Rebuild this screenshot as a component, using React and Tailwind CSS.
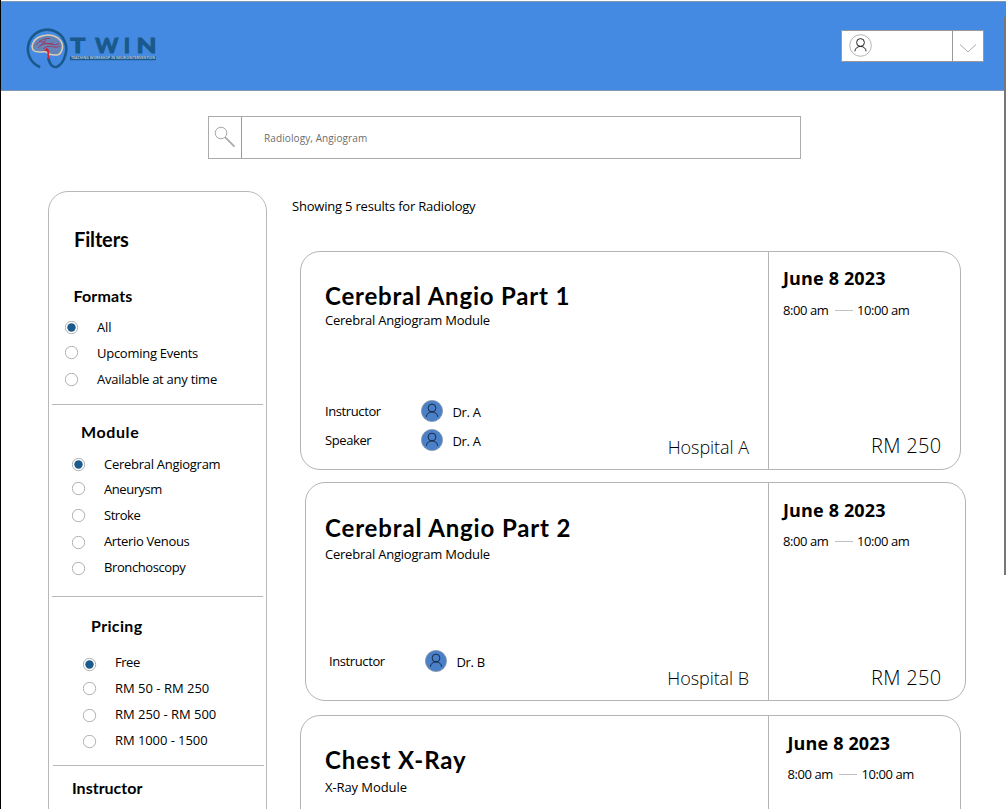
import React from "react";

const heading = "font-['Lato'] font-bold";

function PersonGlyph({ stroke, width = 0.9 }) {
  return (
    <g fill="none" stroke={stroke} strokeWidth={width}>
      <circle cx="11" cy="8" r="3.9" />
      <path d="M5.4 16.8C5.6 13.8 7.9 11.9 11 11.9s5.400 1.900 5.600 4.900" />
    </g>
  );
}

function Avatar() {
  return (
    <svg className="h-[22px] w-[22px] shrink-0" viewBox="0 0 22 22">
      <circle cx="11" cy="11" r="10.600" fill="#4a80c8" stroke="#8f99a8" strokeWidth="0.800" />
      <PersonGlyph stroke="#14233a" />
    </svg>
  );
}

function Logo() {
  return (
    <svg className="h-[46px] w-[134px]" viewBox="0 0 134 46">
      <path d="M15.200 42.200A19.200 19.400 0 1 1 40.200 30.500c-1.200 4.500-4 9-8 11.200-4.500 1.500-7.500-2-9-9" fill="none" stroke="#19598b" strokeWidth="2.600" />
      <path d="M8.500 25.500C5.500 22 8 15.500 13 12.500c4.500-2.500 10.500-3.200 15.500-1.800 6.500 2 10 7.500 8.800 12.800-.6 3-1.700 5-4 6.200-3 .8-6.300.2-9.200-.4-2-1-2.500-2.800-4.700-2.600-3.500.5-7.900 1-10.900-1.200z" fill="#6584b8" stroke="#dccdb0" strokeWidth="1.500" />
      <path d="M11 20c4-5 9-7 14-6.500M13 23c3-4 8-5 12-4s6 1 9-.5M14 16c5 1 8 4 14 2M18 24c3-3 7-3 11-2 3 .5 4 0 6-1M21 13c-1 4-3 6-6 8" fill="none" stroke="#a03560" strokeWidth="0.900" />
      <path d="M21 23.500c3 1 2.300 3 2.100 6l.6 4.500M19.500 25l3 .5" fill="none" stroke="#d31f2e" strokeWidth="1.600" />
      <g fill="#19598b" stroke="#19598b" strokeWidth="1.100" fontFamily="Lato" fontWeight="700" fontSize="21.500">
        <text x="45.200" y="27.800" textLength="15" lengthAdjust="spacingAndGlyphs">T</text>
        <text x="70.300" y="27.800" textLength="23" lengthAdjust="spacingAndGlyphs">W</text>
        <text x="98.800" y="27.800">I</text>
        <text x="111.600" y="27.800" textLength="20" lengthAdjust="spacingAndGlyphs">N</text>
      </g>
      <rect x="45" y="31.200" width="86" height="4" fill="#19598b" />
      <text x="46" y="34.400" fontFamily="Open Sans" fontWeight="700" fontSize="3.300" fill="#b4cbe2" textLength="84" lengthAdjust="spacingAndGlyphs">TEACHING WORKSHOP IN NEUROINTERVENTION</text>
    </svg>
  );
}

function Radio({ checked, className }) {
  return (
    <svg className={`h-[14px] w-[14px] shrink-0 ${className}`} viewBox="0 0 14 14">
      <circle cx="6.500" cy="6.500" r="6.200" fill="#fff" stroke="#a8a8a8" strokeWidth="0.900" />
      {checked && <circle cx="6.500" cy="6.500" r="4.200" fill="#1a5b8c" />}
    </svg>
  );
}

function Options({ items, className }) {
  return (
    <ul className={className}>
      {items.map((o, i) => (
        <li key={o.label} className={`flex items-start gap-[18px] ${o.row || "h-[26px]"}`}>
          <Radio checked={i === 0} className={o.radio} />
          <span className={`whitespace-nowrap text-[13px] leading-5 ${o.track}`}>{o.label}</span>
        </li>
      ))}
    </ul>
  );
}

const formats = [
  { label: "All", radio: "mt-[4px]", track: "tracking-[-0.1px]" },
  { label: "Upcoming Events", radio: "mt-[3px]", track: "tracking-[-0.27px]" },
  { label: "Available at any time", radio: "mt-[3.5px]", track: "tracking-[-0.25px]", row: "h-5" },
];
const modules = [
  { label: "Cerebral Angiogram", radio: "mt-[3.5px]", track: "tracking-[-0.27px]", row: "h-[25px]" },
  { label: "Aneurysm", radio: "mt-[3.4px]", track: "tracking-[-0.45px]" },
  { label: "Stroke", radio: "mt-[4px]", track: "tracking-[-0.45px]" },
  { label: "Arterio Venous", radio: "mt-[4.6px]", track: "tracking-[-0.35px]" },
  { label: "Bronchoscopy", radio: "mt-[4.600px]", track: "tracking-[-0.4px]", row: "h-5" },
];
const prices = [
  { label: "Free", radio: "mt-[5.600px]", track: "tracking-[-0.45px]" },
  { label: "RM 50 - RM 250", radio: "mt-[4px]", track: "tracking-[0px]" },
  { label: "RM 250 - RM 500", radio: "mt-[4.600px]", track: "tracking-[-0.03px]" },
  { label: "RM 1000 - 1500", radio: "mt-[4.600px]", track: "tracking-[-0.07px]", row: "h-5" },
];

function Sidebar() {
  return (
    <aside className="ml-[47px] mt-[100px] h-[720px] w-[219px] shrink-0 rounded-[20px] border border-[#b8b8b8]">
      <h2 className={`${heading} ml-[25px] mt-[35px] text-xl leading-6 tracking-[-0.15px]`}>Filters</h2>
      <h3 className={`${heading} ml-[24.500px] mt-[35px] text-base leading-5 tracking-[0.15px]`}>Formats</h3>
      <Options items={formats} className="ml-4 mt-[11px]" />
      <hr className="ml-[3px] mt-[15px] w-[211px] border-[#b8b8b8]" />
      <h3 className={`${heading} ml-8 mt-[17px] text-base leading-5 tracking-[0.6px]`}>Module</h3>
      <Options items={modules} className="ml-[23px] mt-3" />
      <hr className="ml-[3px] mt-[19px] w-[211px] border-[#b8b8b8]" />
      <h3 className={`${heading} ml-[42px] mt-[19px] text-base leading-5 tracking-[0.35px]`}>Pricing</h3>
      <Options items={prices} className="ml-[34px] mt-4" />
      <hr className="ml-1 mt-[15px] w-[211px] border-[#b8b8b8]" />
      <h3 className={`${heading} ml-[23px] mt-3 text-base leading-5 tracking-[0px]`}>Instructor</h3>
    </aside>
  );
}

const events = [
  {
    title: "Cerebral Angio Part 1", module: "Cerebral Angiogram Module", hospital: "Hospital A", price: "RM 250",
    people: [["Instructor", "Dr. A"], ["Speaker", "Dr. A"]],
    card: "mt-[35px]", left: "w-[468px] pl-6 pt-[29px]", titleTrack: "tracking-[0.8px]", sub: "tracking-[-0.23px]", foot: "mt-[70px]", place: "mt-[35px]",
    right: "pl-[14px] pr-[18.500px] pt-[14px]", time: "mt-[10px]", cost: "mt-[112px]",
  },
  {
    title: "Cerebral Angio Part 2", module: "Cerebral Angiogram Module", hospital: "Hospital B", price: "RM 250",
    people: [["Instructor", "Dr. B"]],
    card: "ml-[5px] mt-3", left: "w-[463px] pl-[19px] pt-[30px]", titleTrack: "tracking-[0.86px]", sub: "mt-[2px] tracking-[-0.23px]", foot: "mt-[86px] pl-1", place: "mt-4",
    right: "pl-[14px] pr-[23.500px] pt-[15px]", time: "mt-[9px]", cost: "mt-[113px]",
  },
  {
    title: "Chest X-Ray", module: "X-Ray Module", people: [],
    card: "mt-[14px]", left: "w-[468px] pl-6 pt-[29px]", titleTrack: "tracking-[0.9px]", sub: "mt-[3px] tracking-[-0.08px]", foot: "", place: "",
    right: "pl-[18.500px] pr-[19px] pt-[15px]", time: "mt-[9px]", cost: "",
  },
];

function EventCard({ e }) {
  return (
    <article className={`flex h-[219px] w-[661px] shrink-0 rounded-[20px] border border-[#b4b4b4] ${e.card}`}>
      <div className={`shrink-0 border-r border-[#b4b4b4] ${e.left}`}>
        <h2 className={`${heading} text-2xl leading-[29px] ${e.titleTrack}`}>{e.title}</h2>
        <p className={`text-[13px] leading-5 ${e.sub}`}>{e.module}</p>
        {e.hospital && (
          <div className={`flex justify-between pr-[19px] ${e.foot}`}>
            <div>
              {e.people.map(([role, name]) => (
                <div key={role} className="flex h-[29px] items-start text-[13px] leading-5 tracking-[-0.4px]">
                  <span className="mt-px w-[95.500px]">{role}</span>
                  <Avatar />
                  <span className="ml-[10px] mt-[2px] tracking-[-0.35px]">{name}</span>
                </div>
              ))}
            </div>
            <span className={`text-lg font-[350] leading-6 tracking-[-0.05px] ${e.place}`}>{e.hospital}</span>
          </div>
        )}
      </div>
      <div className={`flex-1 ${e.right}`}>
        <h3 className="text-lg font-bold leading-6 tracking-[0.14px]">June 8 2023</h3>
        <div className={`flex items-center whitespace-nowrap text-[13px] leading-5 tracking-[-0.44px] ${e.time}`}>
          <span className="w-[51.500px]">8:00 am</span>
          <span className="mt-px h-px w-[18px] bg-[#c0c0c0]" />
          <span className="ml-[4.500px]">10:00 am</span>
        </div>
        {e.price && <p className={`text-right text-xl font-[350] leading-7 tracking-[0.3px] ${e.cost}`}>{e.price}</p>}
      </div>
    </article>
  );
}

export default function App() {
  return (
    <div className="relative h-[809px] w-[1006px] overflow-hidden border-l border-black bg-white font-['Open_Sans',sans-serif] text-black">
      <header className="mt-px flex h-[90px] items-start justify-between border-y border-[#8596b0] bg-[#448ae2] pl-6 pr-[22px]">
        <div className="mt-[23px]"><Logo /></div>
        <div className="mt-7 flex h-8 w-[143px] border border-[#999] bg-white">
          <div className="flex w-[111px] border-r border-[#999] pl-[7px] pt-[3px]">
            <svg className="h-[23px] w-[23px]" viewBox="-0.500 -0.500 23 23">
              <circle cx="11" cy="11" r="10.800" fill="#fff" stroke="#aaa" strokeWidth="0.900" />
              <PersonGlyph stroke="#222" width={1} />
            </svg>
          </div>
          <svg className="h-[30px] w-[30px]" viewBox="0 0 30 30">
            <path d="M7 13.500l8 7.500 8-7.500" fill="none" stroke="#aaa" strokeWidth="1" />
          </svg>
        </div>
      </header>
      <div className="ml-[207px] mt-[25px] flex h-[43px] w-[593px] border border-[#ababab]">
        <div className="w-8 shrink-0">
          <svg className="h-[41px] w-8" viewBox="0 0 32 41">
            <circle cx="12" cy="16" r="5.800" fill="none" stroke="#aaa" strokeWidth="1" />
            <path d="M16 20.200l9.500 9.500" stroke="#aaa" strokeWidth="1.700" />
          </svg>
        </div>
        <div className="border-l border-[#999] pl-[22px] pt-[14px] text-[10px] leading-[14px] tracking-[0.1px] text-[#6d6d6d]">Radiology, Angiogram</div>
      </div>
      <div className="-mt-[68px] flex items-start">
        <Sidebar />
        <main className="ml-[25px] mt-[105px]">
          <p className="text-[13px] leading-5 tracking-[-0.2px]">Showing 5 results for Radiology</p>
          <div className="ml-2">
            {events.map((e) => <EventCard key={e.title} e={e} />)}
          </div>
        </main>
      </div>
      <div className="absolute right-0 top-[17px] h-[558px] w-[2px] bg-[#777]" />
    </div>
  );
}
